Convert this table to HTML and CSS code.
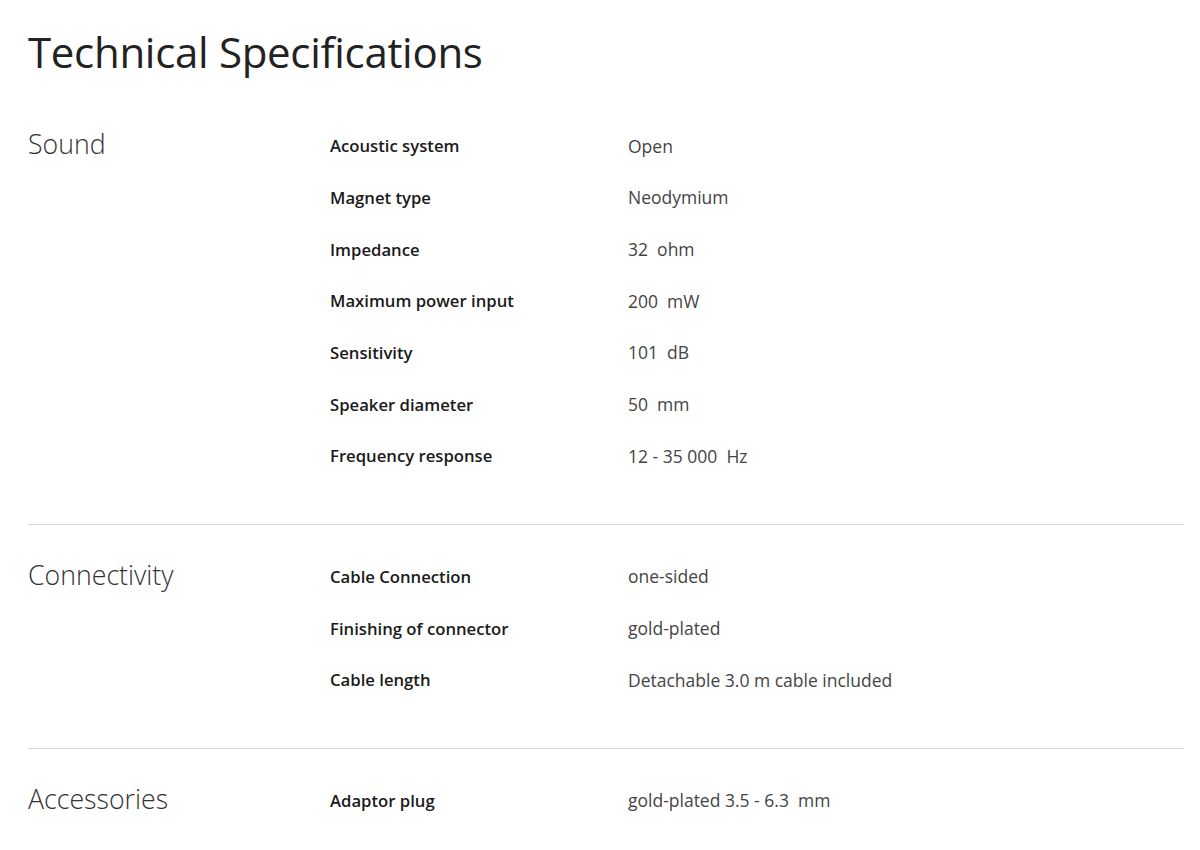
FILE: index.html
```html
<!DOCTYPE html>
<html lang="en">
<head>
<meta charset="utf-8">
<title>Technical Specifications</title>
<link rel="stylesheet" href="styles.css">
</head>
<body>
<main class="page">
  <h1 class="title">Technical Specifications</h1>

  <section class="spec-group">
    <h2 class="group-name">Sound</h2>
    <div class="spec-list">
      <div class="spec-row"><div class="spec-label">Acoustic system</div><div class="spec-value">Open</div></div>
      <div class="spec-row"><div class="spec-label">Magnet type</div><div class="spec-value">Neodymium</div></div>
      <div class="spec-row"><div class="spec-label">Impedance</div><div class="spec-value">32&nbsp; ohm</div></div>
      <div class="spec-row"><div class="spec-label">Maximum power input</div><div class="spec-value">200&nbsp; mW</div></div>
      <div class="spec-row"><div class="spec-label">Sensitivity</div><div class="spec-value">101&nbsp; dB</div></div>
      <div class="spec-row"><div class="spec-label">Speaker diameter</div><div class="spec-value">50&nbsp; mm</div></div>
      <div class="spec-row"><div class="spec-label">Frequency response</div><div class="spec-value">12 - 35 000&nbsp; Hz</div></div>
    </div>
  </section>

  <section class="spec-group">
    <h2 class="group-name">Connectivity</h2>
    <div class="spec-list">
      <div class="spec-row"><div class="spec-label">Cable Connection</div><div class="spec-value">one-sided</div></div>
      <div class="spec-row"><div class="spec-label">Finishing of connector</div><div class="spec-value">gold-plated</div></div>
      <div class="spec-row"><div class="spec-label">Cable length</div><div class="spec-value">Detachable 3.0 m cable included</div></div>
    </div>
  </section>

  <section class="spec-group last">
    <h2 class="group-name">Accessories</h2>
    <div class="spec-list">
      <div class="spec-row"><div class="spec-label">Adaptor plug</div><div class="spec-value">gold-plated 3.5 - 6.3&nbsp; mm</div></div>
    </div>
  </section>
</main>
</body>
</html>
```

FILE: styles.css
```css
* { box-sizing: border-box; }
html, body { margin: 0; padding: 0; background: #fff; }
body {
  font-family: "Open Sans", Lato, "Liberation Sans", sans-serif;
  color: #1f1f1f;
}
.page {
  width: 1184px;
  padding: 26px 0 0 28px;
}
.title {
  margin: 0;
  font-size: 42px;
  font-weight: 400;
  line-height: 52px;
  color: #222;
  letter-spacing: -0.3px;
}
.spec-group {
  display: flex;
  padding: 42px 0 42px 0;
  border-bottom: 1px solid #d6d6d6;
}
.spec-group + .spec-group { padding-top: 26px; }
.spec-group.last { border-bottom: none; }
.group-name {
  margin: 0;
  width: 302px;
  flex: none;
  font-size: 26.7px;
  font-weight: 300;
  line-height: 48px;
  color: #333;
}
.spec-list {
  flex: 1;
  display: flex;
  flex-direction: column;
}
.spec-row {
  display: flex;
  height: 51.67px;
  align-items: center;
}
.spec-label {
  width: 298px;
  flex: none;
  font-size: 16.7px;
  font-weight: 600;
  color: #1a1a1a;
}
.spec-value {
  font-size: 17.5px;
  color: #444;
  font-weight: 400;
}
```
